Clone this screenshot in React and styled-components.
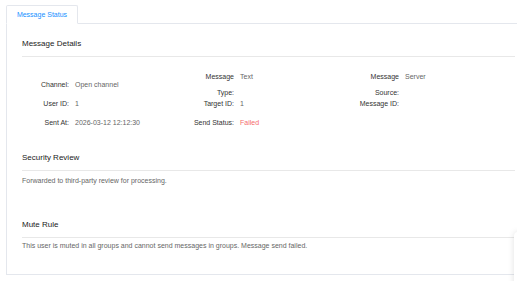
import * as React from "react";
import styled, { createGlobalStyle } from "styled-components";

const GlobalStyle = createGlobalStyle`
  html, body {
    margin: 0;
    padding: 0;
    background: #ffffff;
  }
  body {
    font-family: "Liberation Sans", Arial, sans-serif;
    color: #303133;
  }
`;

const SViewport = styled.div`
  height: 281px;
  overflow: hidden;
  position: relative;
  width: 100%;
`;

const SPage = styled.div`
  padding: 5px 0 0 6px;
`;

const STabBar = styled.div`
  border-bottom: 1px solid #e4e7ed;
  display: flex;
`;

const STab = styled.div`
  background: #ffffff;
  border: 1px solid #e4e7ed;
  border-bottom: 1px solid #ffffff;
  border-radius: 2px 2px 0 0;
  box-sizing: border-box;
  color: #1890ff;
  font-size: 7px;
  height: 19px;
  line-height: 18px;
  margin-bottom: -1px;
  text-align: center;
  width: 72px;
`;

const SPanel = styled.div`
  border: 1px solid #e4e7ed;
  border-top: none;
  box-sizing: border-box;
  padding: 0 15px;
  width: 525px;
`;

const SHeader = styled.div`
  border-bottom: 1px solid #e8e8e8;
  color: #222222;
  font-size: 8px;
  line-height: 16px;
  padding: ${(p) => p.$top || 0}px 0 4px;
`;

const SBody = styled.div`
  padding: ${(p) => p.$pad};
`;

const SGrid = styled.div`
  display: grid;
  grid-auto-rows: 19px;
  grid-template-columns: repeat(3, 165px);
  align-items: center;
`;

const SField = styled.div`
  align-items: flex-start;
  display: flex;
  font-size: 7px;
  line-height: 16px;
`;

const SLabel = styled.div`
  box-sizing: border-box;
  color: #333333;
  flex: none;
  padding-left: 5px;
  text-align: right;
  width: 47px;
`;

const SValue = styled.div`
  color: ${(p) => (p.$danger ? "#f56c6c" : "#666666")};
  padding-left: 6px;
`;

const SText = styled.div`
  color: #666666;
  font-size: 7px;
  line-height: 16px;
`;

const SFloat = styled.div`
  background: #ffffff;
  border-radius: 4px;
  box-shadow: 0 0 6px rgba(0, 0, 0, 0.12);
  height: 60px;
  left: 514px;
  position: absolute;
  top: 232px;
  width: 40px;
`;

const fields = [
  ["Channel:", "Open channel"],
  ["Message Type:", "Text"],
  ["Message Source:", "Server"],
  ["User ID:", "1"],
  ["Target ID:", "1"],
  ["Message ID:", ""],
  ["Sent At:", "2026-03-12 12:12:30"],
  ["Send Status:", "Failed", true],
];

export default function App() {
  return (
    <>
      <GlobalStyle />
      <SViewport>
        <SPage>
          <STabBar>
            <STab>Message Status</STab>
          </STabBar>
          <SPanel>
            <SHeader $top={12}>Message Details</SHeader>
            <SBody $pad="18px 0 18px">
              <SGrid>
                {fields.map(([label, value, danger]) => (
                  <SField key={label}>
                    <SLabel>{label}</SLabel>
                    <SValue $danger={danger}>{value}</SValue>
                  </SField>
                ))}
              </SGrid>
            </SBody>

            <SHeader>Security Review</SHeader>
            <SBody $pad="2px 0 28px">
              <SText>Forwarded to third-party review for processing.</SText>
            </SBody>

            <SHeader>Mute Rule</SHeader>
            <SBody $pad="0 0 20px">
              <SText>
                This user is muted in all groups and cannot send messages in groups. Message send failed.
              </SText>
            </SBody>
          </SPanel>
        </SPage>
        <SFloat />
      </SViewport>
    </>
  );
}
